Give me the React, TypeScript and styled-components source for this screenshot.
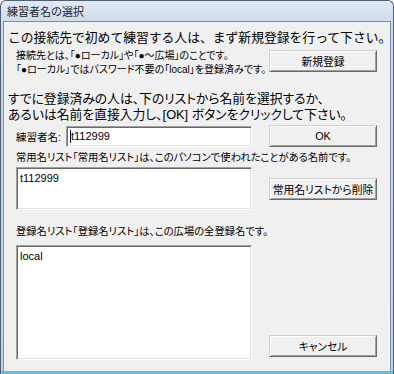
import React from "react";
import styled, { createGlobalStyle } from "styled-components";

const GlobalStyle = createGlobalStyle`
    html, body {
        margin: 0;
        padding: 0;
        background: #ffffff;
    }
    body {
        font-family: "Liberation Sans", "Noto Sans CJK JP", sans-serif;
        color: #000000;
    }
`;

const App: React.FC = () => {
    return (
        <>
            <GlobalStyle />
            <Window>
                <TitleBar>練習者名の選択</TitleBar>
                <Client>
                    <Heading>この接続先で初めて練習する人は、まず新規登録を行って下さい。</Heading>
                    <InfoRow>
                        <InfoText>
                            接続先とは、「●ローカル」や「●〜広場」のことです。
                            <br />
                            「●ローカル」ではパスワード不要の「local」を登録済みです。
                        </InfoText>
                        <PushButton $offset={1}>新規登録</PushButton>
                    </InfoRow>
                    <Heading $top={14} $palt>
                        すでに登録済みの人は、下のリストから名前を選択するか、
                        <br />
                        あるいは名前を直接入力し、[OK] ボタンをクリックして下さい。
                    </Heading>
                    <Form>
                        <FieldRow>
                            <LeftCol>
                                <NameLabel>練習者名:</NameLabel>
                                <TextInput>
                                    <Caret />
                                    t112999
                                </TextInput>
                            </LeftCol>
                            <PushButton>OK</PushButton>
                        </FieldRow>
                        <Caption $top={4}>
                            常用名リスト「常用名リスト」は、このパソコンで使われたことがある名前です。
                        </Caption>
                        <FieldRow $top={2}>
                            <ListBox $height={43}>
                                <ListItem>t112999</ListItem>
                            </ListBox>
                            <PushButton $align="center">常用名リストから削除</PushButton>
                        </FieldRow>
                        <Caption $top={15}>
                            登録名リスト「登録名リスト」は、この広場の全登録名です。
                        </Caption>
                        <FieldRow $top={6}>
                            <ListBox $height={115}>
                                <ListItem>local</ListItem>
                            </ListBox>
                            <PushButton $align="flex-end" $bottom={3}>
                                キャンセル
                            </PushButton>
                        </FieldRow>
                    </Form>
                </Client>
                <BottomEdge />
            </Window>
        </>
    );
};

export default App;

const Window = styled.div`
    width: 394px;
    height: 374px;
    box-sizing: border-box;
    display: flex;
    flex-direction: column;
    border: 1px solid #4f6075;
    border-bottom: none;
    border-radius: 6px 6px 0 0;
    background: linear-gradient(#e1e9f4, #cbd9ea 24px, #c3d3e6);
    padding: 0 2px;
    overflow: hidden;
`;

const TitleBar = styled.div`
    height: 20px;
    display: flex;
    align-items: center;
    padding-left: 4px;
    font-family: "Noto Sans CJK JP", sans-serif;
    font-size: 11px;
    color: #1e1e1e;
`;

const Client = styled.div`
    flex: 1;
    display: flex;
    flex-direction: column;
    background: #f0f0f0;
    border: 1px solid #7f8fa3;
    border-bottom: none;
`;

const BottomEdge = styled.div`
    height: 3px;
    margin: 0 -2px;
    background: #5cc0e0;
`;

const Heading = styled.div<{ $top?: number; $palt?: boolean }>`
    margin: ${p => p.$top ?? 8}px 0 0 4px;
    font-size: 12.8px;
    line-height: 16px;
    white-space: nowrap;
    font-feature-settings: ${p => (p.$palt ? '"palt"' : "normal")};
`;

const InfoRow = styled.div`
    display: flex;
    margin-top: 3px;
    padding-left: 12px;
`;

const InfoText = styled.div`
    flex: 0 0 253px;
    font-size: 10px;
    line-height: 14px;
    white-space: nowrap;
    font-feature-settings: "palt";
`;

const PushButton = styled.div<{ $offset?: number; $align?: string; $bottom?: number }>`
    box-sizing: border-box;
    flex: 0 0 108px;
    height: 22px;
    margin-top: ${p => p.$offset ?? 0}px;
    margin-bottom: ${p => p.$bottom ?? 0}px;
    align-self: ${p => p.$align ?? "flex-start"};
    display: flex;
    align-items: center;
    justify-content: center;
    background: #f0f0f0;
    border: 1px solid;
    border-color: #cfcfcf #6a6a6a #6a6a6a #cfcfcf;
    box-shadow: inset 1px 1px 0 #ffffff, inset -1px -1px 0 #a0a0a0;
    font-size: 10.8px;
    color: #000000;
    white-space: nowrap;
    font-feature-settings: "palt";
`;

const Form = styled.div`
    display: flex;
    flex-direction: column;
    margin-top: 2px;
    padding-left: 12px;
`;

const FieldRow = styled.div<{ $top?: number }>`
    display: flex;
    gap: 17px;
    margin-top: ${p => p.$top ?? 0}px;
`;

const LeftCol = styled.div`
    flex: 0 0 236px;
    display: flex;
    align-items: center;
`;

const NameLabel = styled.span`
    flex: 0 0 50px;
    font-size: 10.5px;
    white-space: nowrap;
    font-feature-settings: "palt";
`;

const TextInput = styled.div`
    box-sizing: border-box;
    flex: 0 0 186px;
    height: 21px;
    display: flex;
    align-items: center;
    padding-left: 3px;
    background: #ffffff;
    border: 1px solid;
    border-color: #a0a0a0 #ffffff #ffffff #a0a0a0;
    box-shadow: inset 1px 1px 0 #696969, inset -1px -1px 0 #e3e3e3;
    font-size: 11px;
`;

const Caret = styled.span`
    width: 1px;
    height: 13px;
    background: #000000;
`;

const Caption = styled.div<{ $top?: number }>`
    margin-top: ${p => p.$top ?? 0}px;
    font-size: 10.3px;
    line-height: 14px;
    white-space: nowrap;
    font-feature-settings: "palt";
`;

const ListBox = styled.div<{ $height: number }>`
    box-sizing: border-box;
    flex: 0 0 236px;
    height: ${p => p.$height}px;
    padding: 3px 3px;
    background: #ffffff;
    border: 1px solid;
    border-color: #a0a0a0 #ffffff #ffffff #a0a0a0;
    box-shadow: inset 1px 1px 0 #696969, inset -1px -1px 0 #e3e3e3;
`;

const ListItem = styled.div`
    font-size: 11px;
    line-height: 14px;
`;
